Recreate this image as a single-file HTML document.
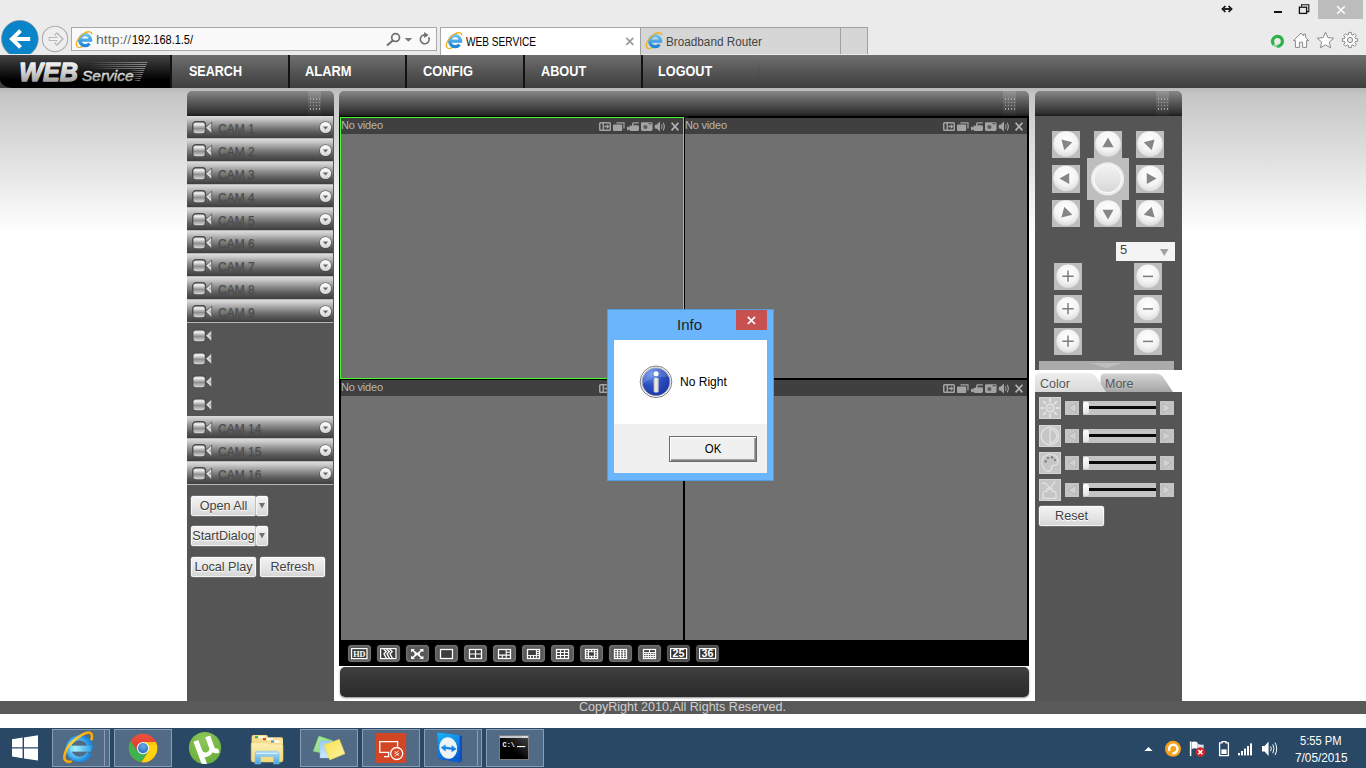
<!DOCTYPE html>
<html><head><meta charset="utf-8"><title>WEB SERVICE</title>
<style>
*{box-sizing:border-box;margin:0;padding:0}
html,body{width:1366px;height:768px;overflow:hidden;background:#fff;font-family:"Liberation Sans",Arial,sans-serif;}
.abs,.abs-c>*{position:absolute}
svg{position:absolute;overflow:visible}
.sx{display:inline-block;transform-origin:0 50%;white-space:nowrap}
#chrome{position:absolute;left:0;top:0;width:1366px;height:55px;background:#ebebeb}
#page{position:absolute;left:0;top:55px;width:1366px;height:673px;background:linear-gradient(#b9b9b9 0px,#b9b9b9 33px,#c6c6c6 40px,#fff 178px,#fff 100%)}
#nav{position:absolute;left:0;top:0;width:1366px;height:33px;background:linear-gradient(#6f6f6f,#555 50%,#3e3e3e)}
.sep{position:absolute;top:0;width:2px;height:33px;background:#121212}
.mi{position:absolute;top:0;height:33px;line-height:32px;color:#fff;font-weight:bold;font-size:14px;white-space:nowrap;transform-origin:0 50%}
#logo{position:absolute;left:0;top:0;width:171px;height:33px;background:linear-gradient(#444,#1c1c1c 45%,#000 75%);border-bottom-left-radius:12px 9px}
.ph{position:absolute;height:25px;border-radius:5px 5px 0 0;background:linear-gradient(#878787,#5e5e5e 40%,#2e2e2e 90%,#1c1c1c)}
.grip{position:absolute;top:0;width:13px;height:25px;background:linear-gradient(rgba(255,255,255,.13),rgba(255,255,255,.02))}
.grip i{position:absolute;width:1px;height:1.5px;background:#a4a4a4}
.panel{position:absolute;background:#555}
#taskbar{position:absolute;left:0;top:728px;width:1366px;height:40px;background:#284866}
</style></head><body>
<svg width="0" height="0" style="left:0;top:0"><defs>
<linearGradient id="ieg" x1="0" y1="0" x2="0" y2="1"><stop offset="0" stop-color="#6cc3f2"/><stop offset="1" stop-color="#1f86d6"/></linearGradient>
<g id="ieico">
 <path d="M14.5 12.4 A5.5 5.5 0 1 1 15.6 9.2 H5" fill="none" stroke="url(#ieg)" stroke-width="3.3"/>
 <path d="M2.4 15.8 C-0.8 12.6 4.3 4.8 9.6 2 C13.6 0 17 0.5 16.8 3.4" fill="none" stroke="#f1b021" stroke-width="1.4"/>
 <path d="M2.4 15.8 C3.4 16.8 5.4 16.5 7.2 15.6" fill="none" stroke="#f1b021" stroke-width="1.2"/>
</g>
</defs></svg>
<style>
#u1{transform:scaleX(1.1253)}
#u2{transform:scaleX(0.8775)}
#t1{transform:scaleX(0.8419)}
#t2{transform:scaleX(0.9788)}
#m1{transform:scaleX(0.8964)}
#m2{transform:scaleX(0.9199)}
#m3{transform:scaleX(0.9182)}
#m4{transform:scaleX(0.9080)}
#m5{transform:scaleX(0.9067)}
#cp{transform:scaleX(0.9645)}
#dti{transform:scaleX(0.9988)}
#dnr{transform:scaleX(1.0024)}
#dok{transform:scaleX(0.9135)}
#ck1{transform:scaleX(0.9283)}
#ck2{transform:scaleX(0.9833)}
</style>
<div id="chrome">
<style>
#chrome .addr{position:absolute;left:71px;top:27px;width:366px;height:24px;background:#f9f9f9;border:1px solid #a9a9a9}
#chrome .url{position:absolute;left:96px;top:28px;height:24px;line-height:24px;font-size:12.5px;color:#000;white-space:nowrap}
#chrome .url b{font-weight:normal;color:#6a6a6a}
#chrome .tab1{position:absolute;left:440px;top:27px;width:201px;height:28px;background:#fff;border:1px solid #a9a9a9;border-bottom:none}
#chrome .tab2{position:absolute;left:640px;top:27px;width:201px;height:27px;background:#d6d6d6;border:1px solid #a0a0a0;border-bottom:none}
#chrome .tab3{position:absolute;left:840px;top:27px;width:28px;height:27px;background:#d6d6d6;border:1px solid #a0a0a0;border-bottom:none}
#chrome .tt{position:absolute;top:29px;height:26px;line-height:26px;font-size:12px;white-space:nowrap}
#chrome .closeb{position:absolute;left:1318px;top:0;width:45px;height:19px;background:#bcbcbc}
</style>
<!-- back button -->
<svg style="left:0;top:18px" width="42" height="36" viewBox="0 18 42 36">
 <defs><clipPath id="bkc"><rect x="0" y="18" width="42" height="36"/></clipPath></defs>
 <g clip-path="url(#bkc)">
 <circle cx="19.9" cy="38.8" r="18.4" fill="#0a84c8" stroke="#8a8f96" stroke-width="0.7"/>
 <path d="M30.2 39 H13 M20.55 30.55 L12 39 L20.55 47.45" fill="none" stroke="#fff" stroke-width="4" stroke-linecap="butt" stroke-linejoin="miter"/>
 </g>
</svg>
<!-- forward button -->
<svg style="left:41px;top:25px" width="28" height="28" viewBox="41 25 28 28">
 <circle cx="55" cy="38.9" r="12.7" fill="#eeeeee" stroke="#adadad" stroke-width="1.1"/>
 <path d="M48.6 39 H60 M55.6 33.4 L61.2 39 L55.6 44.6" fill="none" stroke="#b9b9b9" stroke-width="3.9" stroke-linecap="butt" stroke-linejoin="miter"/>
 <path d="M49.6 39 H60 M56.1 34.6 L60.5 39 L56.1 43.4" fill="none" stroke="#f3f3f3" stroke-width="1.9" stroke-linecap="butt" stroke-linejoin="miter"/>
</svg>
<div class="addr"></div>
<!-- IE icon (address) -->
<svg style="left:74.5px;top:30.5px" width="18" height="17" viewBox="0 0 18 17"><use href="#ieico"/></svg>
<div class="url"><span class="sx" id="u1"><b>http://</b></span></div>
<div class="url" style="left:132px"><span class="sx" id="u2">192.168.1.5/</span></div>
<!-- search / dropdown / refresh -->
<svg style="left:385px;top:30px" width="48" height="18" viewBox="385 30 48 18">
 <circle cx="395.6" cy="37.6" r="3.9" fill="none" stroke="#6f6f6f" stroke-width="1.7"/>
 <path d="M392.8 40.6 L387 45.5" stroke="#6f6f6f" stroke-width="2" stroke-linecap="butt"/>
 <path d="M404.6 38 H412.2 L408.4 41.8 Z" fill="#7a7a7a"/>
 <path d="M428.6 37.2 A4.4 4.4 0 1 1 425 34.9" fill="none" stroke="#6f6f6f" stroke-width="1.6"/>
 <path d="M424.2 32 L428.6 34.9 L424.2 38 Z" fill="#6f6f6f"/>
</svg>
<div class="tab1"></div>
<div class="tab2"></div>
<div class="tab3"></div>
<svg style="left:445px;top:32px" width="18" height="17" viewBox="0 0 18 17"><use href="#ieico"/></svg>
<div class="tt" style="left:466px;color:#000"><span class="sx" id="t1">WEB SERVICE</span></div>
<svg style="left:625px;top:37px" width="10" height="9" viewBox="0 0 10 9"><path d="M1.3 0.8 L8.3 7.8 M8.3 0.8 L1.3 7.8" stroke="#9a9a9a" stroke-width="1.7"/></svg>
<svg style="left:645px;top:32px" width="18" height="17" viewBox="0 0 18 17"><use href="#ieico"/></svg>
<div class="tt" style="left:666px;color:#444"><span class="sx" id="t2">Broadband Router</span></div>
<!-- window buttons -->
<svg style="left:1220px;top:3px" width="14" height="12" viewBox="0 0 14 12"><path d="M3.6 6 H10.4" stroke="#111" stroke-width="1.8"/><path d="M5.4 3 L2.4 6 L5.4 9 M8.6 3 L11.6 6 L8.6 9" fill="none" stroke="#111" stroke-width="1.7"/></svg>
<div class="abs" style="left:1274px;top:11px;width:8px;height:2px;background:#111"></div>
<svg style="left:1298px;top:3px" width="13" height="12" viewBox="0 0 13 12"><path d="M3.5 3.5 V1.8 H10.8 V8.6 H9" fill="none" stroke="#111" stroke-width="1.1"/><rect x="1.4" y="4.2" width="7.2" height="6.2" fill="none" stroke="#111" stroke-width="1.3"/></svg>
<div class="closeb"></div>
<svg style="left:1336px;top:5px" width="10" height="10" viewBox="0 0 10 10"><path d="M1.2 1.2 L8.8 8.8 M8.8 1.2 L1.2 8.8" stroke="#fff" stroke-width="1.5"/></svg>
<!-- right toolbar icons -->
<svg style="left:1269px;top:33px" width="17" height="17" viewBox="0 0 17 17">
 <path d="M4.7 11.6 A5 5 0 1 1 8.2 13.3" fill="none" stroke="#2db24a" stroke-width="3.2" stroke-linecap="butt"/>
 <path d="M8.2 13.3 A5 5 0 0 1 4.7 11.6" fill="none" stroke="#7fd092" stroke-width="2.2"/>
</svg>
<svg style="left:1292px;top:31px" width="18" height="18" viewBox="0 0 18 18">
 <path d="M1.4 9.6 L9 2.2 L11.6 4.7 V3.2 H13.6 V6.6 L16.6 9.6 H14.6 V16.4 H10.6 V11.2 H7.4 V16.4 H3.4 V9.6 Z" fill="#fdfdfd" stroke="#8a8a8a" stroke-width="1"/>
</svg>
<svg style="left:1316px;top:31px" width="19" height="18" viewBox="0 0 19 18">
 <path d="M9.5 1.3 L11.9 6.6 L17.7 7.2 L13.4 11.1 L14.6 16.8 L9.5 13.9 L4.4 16.8 L5.6 11.1 L1.3 7.2 L7.1 6.6 Z" fill="#fdfdfd" stroke="#8a8a8a" stroke-width="1" stroke-linejoin="round"/>
</svg>
<svg style="left:1341px;top:31px" width="18" height="18" viewBox="-9 -9 18 18">
 <g fill="#fdfdfd" stroke="#8a8a8a" stroke-width="1">
 <path d="M5.41 -1.44 L7.59 -1.30 L7.59 1.30 L5.41 1.44 L4.84 2.81 L6.29 4.45 L4.45 6.29 L2.81 4.84 L1.44 5.41 L1.30 7.59 L-1.30 7.59 L-1.44 5.41 L-2.81 4.84 L-4.45 6.29 L-6.29 4.45 L-4.84 2.81 L-5.41 1.44 L-7.59 1.30 L-7.59 -1.30 L-5.41 -1.44 L-4.84 -2.81 L-6.29 -4.45 L-4.45 -6.29 L-2.81 -4.84 L-1.44 -5.41 L-1.30 -7.59 L1.30 -7.59 L1.44 -5.41 L2.81 -4.84 L4.45 -6.29 L6.29 -4.45 L4.84 -2.81 Z" stroke-linejoin="round"/>
 <circle r="2.6" fill="#ebebeb"/>
 </g>
</svg>
</div>
<div id="page">
 <div id="nav">
  <div id="logo">
   <svg style="left:0;top:0" width="171" height="33" viewBox="0 0 171 33">
    <defs>
     <linearGradient id="lgt" x1="0" y1="0" x2="0" y2="1"><stop offset="0" stop-color="#ffffff"/><stop offset="0.45" stop-color="#d8d8d8"/><stop offset="1" stop-color="#8c8c8c"/></linearGradient>
     <linearGradient id="lgs" x1="0" y1="0" x2="1" y2="0"><stop offset="0" stop-color="#9a9a9a" stop-opacity="0"/><stop offset="0.5" stop-color="#8c8c8c" stop-opacity=".55"/><stop offset="1" stop-color="#a5a5a5" stop-opacity=".8"/></linearGradient>
    </defs>
    <g fill="url(#lgs)"><path d="M88.0 7 H147.5 L147.1 8 H88.0 Z"/><path d="M88.5 9 H146.7 L146.3 10 H88.5 Z"/><path d="M89.0 11 H145.9 L145.5 12 H89.0 Z"/><path d="M89.5 13 H145.1 L144.7 14 H89.5 Z"/><path d="M128.0 15 H144.3 L143.9 16 H128.0 Z"/><path d="M129.0 17 H143.5 L143.1 18 H129.0 Z"/><path d="M130.0 19 H142.7 L142.3 20 H130.0 Z"/><path d="M131.0 21 H141.9 L141.5 22 H131.0 Z"/><path d="M132.0 23 H141.1 L140.7 24 H132.0 Z"/><path d="M133.0 25 H140.3 L139.9 26 H133.0 Z"/></g>
    <text x="19.3" y="26.2" font-family="Liberation Sans, Arial, sans-serif" font-weight="bold" font-style="italic" font-size="25" fill="url(#lgt)" stroke="url(#lgt)" stroke-width="1.3" stroke-linejoin="round" textLength="58.6" lengthAdjust="spacingAndGlyphs">WEB</text>
    <text x="82" y="25.6" font-family="Liberation Sans, Arial, sans-serif" font-style="italic" font-size="15.2" fill="url(#lgt)" stroke="url(#lgt)" stroke-width="0.45" textLength="51.5" lengthAdjust="spacingAndGlyphs">Service</text>
   </svg>
  </div>
  <div class="sep" style="left:170px"></div><div class="mi" style="left:189px"><span class="sx" id="m1">SEARCH</span></div>
  <div class="sep" style="left:288px"></div><div class="mi" style="left:305px"><span class="sx" id="m2">ALARM</span></div>
  <div class="sep" style="left:405px"></div><div class="mi" style="left:423px"><span class="sx" id="m3">CONFIG</span></div>
  <div class="sep" style="left:523px"></div><div class="mi" style="left:541px"><span class="sx" id="m4">ABOUT</span></div>
  <div class="sep" style="left:641px"></div><div class="mi" style="left:658px"><span class="sx" id="m5">LOGOUT</span></div>
  <div class="abs" style="left:758px;top:8px;width:1px;height:20px;background:rgba(0,0,0,.07)"></div>
 </div>
 <!-- footer -->
 <div class="abs" style="left:0;top:646px;width:1366px;height:13px;background:#595959"></div>
 <div class="abs" style="left:0;top:659px;width:1366px;height:14px;background:#fff"></div>
 <div class="abs" id="copy" style="left:579px;top:645px;height:14px;line-height:14px;font-size:13px;color:#cfcfcf;white-space:nowrap"><span class="sx" id="cp">CopyRight 2010,All Rights Reserved.</span></div>
</div><!-- END PAGE -->
<style>
.camrow{position:absolute;left:187px;width:146px;height:23px;background:linear-gradient(#dcdcdc 0,#c9c9c9 3px,#8a8a8a 10px,#5b5b5b 16px,#3e3e3e 22px,#b8b8b8 22px,#b8b8b8 23px)}
.camrow span.t{position:absolute;left:31px;top:6px;font-size:12px;line-height:14px;color:#4b4b4b;text-shadow:0 1px 1px rgba(70,70,70,.45);white-space:nowrap}
.lbtn{position:absolute;height:20px;border-radius:2.5px;background:linear-gradient(#f4f4f4,#e4e4e4 60%,#d4d4d4);box-shadow:inset 0 0 0 1px rgba(255,255,255,.7),0 0 0 0.5px #888;font-size:12.6px;line-height:20px;color:#404040;text-align:center;white-space:nowrap;text-shadow:0 1px 0 #fff}
</style>
<svg width="0" height="0" style="left:0;top:0"><defs>
<linearGradient id="camg" x1="0" y1="0" x2="0" y2="1"><stop offset="0" stop-color="#cfcfcf"/><stop offset="0.22" stop-color="#ececec"/><stop offset="0.55" stop-color="#8e8e8e"/><stop offset="0.8" stop-color="#bdbdbd"/><stop offset="1" stop-color="#e2e2e2"/></linearGradient>
<linearGradient id="ddg" x1="0" y1="0" x2="0" y2="1"><stop offset="0" stop-color="#ffffff"/><stop offset="1" stop-color="#d4d4d4"/></linearGradient>
<g id="cam">
 <rect x="0.7" y="0.7" width="12.8" height="12.2" rx="3.2" fill="url(#camg)" stroke="#4c4c4c" stroke-width="1.4"/>
 <path d="M13.7 6.7 L19.7 1 V12.4 Z" fill="#dedede" stroke="#505050" stroke-width="0.8" stroke-linejoin="round"/>
 <path d="M16.8 6.7 L18.7 4.6 V8.8 Z" fill="#a6a6a6"/>
</g>
<g id="dd">
 <circle cx="6.5" cy="6.7" r="6.4" fill="#444" opacity=".6"/>
 <circle cx="6.5" cy="6.5" r="5.6" fill="url(#ddg)"/>
 <path d="M3.9 5.4 H9.1 L6.5 8.4 Z" fill="#666"/>
</g>
</defs></svg>
<div class="panel" style="left:187px;top:115px;width:147px;height:586px"></div>
<div class="ph" style="left:187px;top:91px;width:147px"><div class="grip" style="left:121px"><i style="left:2px;top:7.4px"></i><i style="left:5px;top:7.4px"></i><i style="left:8px;top:7.4px"></i><i style="left:11px;top:7.4px"></i><i style="left:2px;top:10.6px"></i><i style="left:5px;top:10.6px"></i><i style="left:8px;top:10.6px"></i><i style="left:11px;top:10.6px"></i><i style="left:2px;top:13.8px"></i><i style="left:5px;top:13.8px"></i><i style="left:8px;top:13.8px"></i><i style="left:11px;top:13.8px"></i><i style="left:2px;top:17.0px"></i><i style="left:5px;top:17.0px"></i><i style="left:8px;top:17.0px"></i><i style="left:11px;top:17.0px"></i></div></div>
<div class="camrow" style="top:116px"><svg style="left:5px;top:5px" width="21" height="14" viewBox="0 0 21 14"><use href="#cam"/></svg><span class="t">CAM 1</span><svg style="left:132px;top:4.8px" width="13" height="13" viewBox="0 0 13 13"><use href="#dd"/></svg></div>
<div class="camrow" style="top:139px"><svg style="left:5px;top:5px" width="21" height="14" viewBox="0 0 21 14"><use href="#cam"/></svg><span class="t">CAM 2</span><svg style="left:132px;top:4.8px" width="13" height="13" viewBox="0 0 13 13"><use href="#dd"/></svg></div>
<div class="camrow" style="top:162px"><svg style="left:5px;top:5px" width="21" height="14" viewBox="0 0 21 14"><use href="#cam"/></svg><span class="t">CAM 3</span><svg style="left:132px;top:4.8px" width="13" height="13" viewBox="0 0 13 13"><use href="#dd"/></svg></div>
<div class="camrow" style="top:185px"><svg style="left:5px;top:5px" width="21" height="14" viewBox="0 0 21 14"><use href="#cam"/></svg><span class="t">CAM 4</span><svg style="left:132px;top:4.8px" width="13" height="13" viewBox="0 0 13 13"><use href="#dd"/></svg></div>
<div class="camrow" style="top:208px"><svg style="left:5px;top:5px" width="21" height="14" viewBox="0 0 21 14"><use href="#cam"/></svg><span class="t">CAM 5</span><svg style="left:132px;top:4.8px" width="13" height="13" viewBox="0 0 13 13"><use href="#dd"/></svg></div>
<div class="camrow" style="top:231px"><svg style="left:5px;top:5px" width="21" height="14" viewBox="0 0 21 14"><use href="#cam"/></svg><span class="t">CAM 6</span><svg style="left:132px;top:4.8px" width="13" height="13" viewBox="0 0 13 13"><use href="#dd"/></svg></div>
<div class="camrow" style="top:254px"><svg style="left:5px;top:5px" width="21" height="14" viewBox="0 0 21 14"><use href="#cam"/></svg><span class="t">CAM 7</span><svg style="left:132px;top:4.8px" width="13" height="13" viewBox="0 0 13 13"><use href="#dd"/></svg></div>
<div class="camrow" style="top:277px"><svg style="left:5px;top:5px" width="21" height="14" viewBox="0 0 21 14"><use href="#cam"/></svg><span class="t">CAM 8</span><svg style="left:132px;top:4.8px" width="13" height="13" viewBox="0 0 13 13"><use href="#dd"/></svg></div>
<div class="camrow" style="top:300px"><svg style="left:5px;top:5px" width="21" height="14" viewBox="0 0 21 14"><use href="#cam"/></svg><span class="t">CAM 9</span><svg style="left:132px;top:4.8px" width="13" height="13" viewBox="0 0 13 13"><use href="#dd"/></svg></div>
<svg style="left:192px;top:329px" width="21" height="14" viewBox="0 0 21 14"><use href="#cam"/></svg>
<svg style="left:192px;top:352px" width="21" height="14" viewBox="0 0 21 14"><use href="#cam"/></svg>
<svg style="left:192px;top:375px" width="21" height="14" viewBox="0 0 21 14"><use href="#cam"/></svg>
<svg style="left:192px;top:398px" width="21" height="14" viewBox="0 0 21 14"><use href="#cam"/></svg>
<div class="camrow" style="top:416px"><svg style="left:5px;top:5px" width="21" height="14" viewBox="0 0 21 14"><use href="#cam"/></svg><span class="t">CAM 14</span><svg style="left:132px;top:4.8px" width="13" height="13" viewBox="0 0 13 13"><use href="#dd"/></svg></div>
<div class="camrow" style="top:439px"><svg style="left:5px;top:5px" width="21" height="14" viewBox="0 0 21 14"><use href="#cam"/></svg><span class="t">CAM 15</span><svg style="left:132px;top:4.8px" width="13" height="13" viewBox="0 0 13 13"><use href="#dd"/></svg></div>
<div class="camrow" style="top:462px"><svg style="left:5px;top:5px" width="21" height="14" viewBox="0 0 21 14"><use href="#cam"/></svg><span class="t">CAM 16</span><svg style="left:132px;top:4.8px" width="13" height="13" viewBox="0 0 13 13"><use href="#dd"/></svg></div>
<div class="lbtn" style="left:191px;top:496px;width:65px">Open All</div>
<div class="lbtn" style="left:256px;top:496px;width:12px"><svg style="left:3px;top:7px" width="6" height="6" viewBox="0 0 6 6"><path d="M0 0 H6 L3 5.6 Z" fill="#707070"/></svg></div>
<div class="lbtn" style="left:191px;top:526px;width:65px">StartDialog</div>
<div class="lbtn" style="left:256px;top:526px;width:12px"><svg style="left:3px;top:7px" width="6" height="6" viewBox="0 0 6 6"><path d="M0 0 H6 L3 5.6 Z" fill="#707070"/></svg></div>
<div class="lbtn" style="left:191px;top:557px;width:65px">Local Play</div>
<div class="lbtn" style="left:260px;top:557px;width:65px">Refresh</div>
<style>
.cell{position:absolute;width:344px;height:262px;border:1px solid #000;background:#707070}
.cell.sel{border-color:#42ff2a}
.cell .tb{position:absolute;left:0;top:0;width:342px;height:16px;background:#404040}
.cell .nv{position:absolute;left:0px;top:1px;font-size:11px;line-height:13px;color:#b6b6b6;white-space:nowrap;letter-spacing:-0.2px}
.tbtn{position:absolute;top:645px;width:23px;height:17px;border-radius:4px;background:#585858;box-shadow:inset 0 0 2px 1.2px #757575,0 0 1px rgba(100,100,100,.7)}
.tbtn.dk{background:#474747;box-shadow:inset 0 0 2px 1.2px #5e5e5e,0 0 1px rgba(90,90,90,.7)}
.tbtn svg{left:0;top:0}
.tbtn text{font-family:"Liberation Sans",Arial,sans-serif;font-weight:bold;font-size:10px;fill:#fff}
</style>
<svg width="0" height="0" style="left:0;top:0"><defs>
<g id="tico" fill="#a3a3a3" stroke="none">
 <!-- 1: box with arrow, x 0..12 -->
 <path d="M1.6 0 H10.4 Q12 0 12 1.6 V7.4 Q12 9 10.4 9 H1.6 Q0 9 0 7.4 V1.6 Q0 0 1.6 0 Z M1.5 1.5 V7.5 H3.6 V1.5 Z M5 1.5 V7.5 H10.5 V1.5 Z" fill-rule="evenodd"/>
 <path d="M5.4 3.7 H7.8 V2 L10.6 4.5 L7.8 7 V5.3 H5.4 Z"/>
 <!-- 2: two windows, x 14..26 -->
 <path d="M17.4 0.3 H25.6 V6.4 H24.4 V1.5 H17.4 Z"/>
 <rect x="14" y="2.6" width="9.2" height="6.4" rx="0.8"/>
 <!-- 3: record camera, x 28..40 -->
 <path d="M28 4.6 L30.4 5.4 V3.8 H33 V1.8 Q33 0.2 34.8 0.2 H39.8 V1.6 H35 Q34.4 1.6 34.4 2.3 V3.2 H38.6 Q40 3.2 40 4.6 V7.6 Q40 9 38.6 9 H31.8 Q30.4 9 30.4 7.6 L28 8.4 Z"/>
 <!-- 4: photo camera, x 42..53.5 -->
 <path d="M43.4 0.2 H52.2 Q53.6 0.2 53.6 1.6 V7.6 Q53.6 9 52.2 9 H43.4 Q42 9 42 7.6 V1.6 Q42 0.2 43.4 0.2 Z M49.6 1.3 V2.3 H52.4 V1.3 Z" fill-rule="evenodd"/>
 <circle cx="46.4" cy="5" r="2.1" fill="#5c5c5c"/>
 <!-- 5: speaker, x 55.8..67 -->
 <path d="M55.8 2.8 H57.4 L61 -0.4 V9.6 L57.4 6.4 H55.8 Z"/>
 <path d="M62.4 2.4 Q63.8 4.6 62.4 6.8" fill="none" stroke="#a3a3a3" stroke-width="1"/>
 <path d="M64 0.8 Q66.6 4.6 64 8.4" fill="none" stroke="#a3a3a3" stroke-width="1.1"/>
 <!-- 6: X, x 72..80 -->
 <path d="M72.6 0.8 L79.4 8.4 M79.4 0.8 L72.6 8.4" fill="none" stroke="#b4b4b4" stroke-width="1.7"/>
</g>
</defs></svg>
<div class="abs" style="left:339px;top:115px;width:690px;height:551px;background:#000"></div>
<div class="ph" style="left:339px;top:91px;width:690px"><div class="grip" style="left:664px"><i style="left:2px;top:7.4px"></i><i style="left:5px;top:7.4px"></i><i style="left:8px;top:7.4px"></i><i style="left:11px;top:7.4px"></i><i style="left:2px;top:10.6px"></i><i style="left:5px;top:10.6px"></i><i style="left:8px;top:10.6px"></i><i style="left:11px;top:10.6px"></i><i style="left:2px;top:13.8px"></i><i style="left:5px;top:13.8px"></i><i style="left:8px;top:13.8px"></i><i style="left:11px;top:13.8px"></i><i style="left:2px;top:17.0px"></i><i style="left:5px;top:17.0px"></i><i style="left:8px;top:17.0px"></i><i style="left:11px;top:17.0px"></i></div></div>
<div class="cell sel" style="left:340px;top:117px"><div class="tb"></div><div class="nv">No video</div><svg style="left:258px;top:4px" width="82" height="10" viewBox="0 0 82 10"><use href="#tico"/></svg></div>
<div class="cell" style="left:684px;top:117px"><div class="tb"></div><div class="nv">No video</div><svg style="left:258px;top:4px" width="82" height="10" viewBox="0 0 82 10"><use href="#tico"/></svg></div>
<div class="cell" style="left:340px;top:379px"><div class="tb"></div><div class="nv">No video</div><svg style="left:258px;top:4px" width="82" height="10" viewBox="0 0 82 10"><use href="#tico"/></svg></div>
<div class="cell" style="left:684px;top:379px"><div class="tb"></div><div class="nv">No video</div><svg style="left:258px;top:4px" width="82" height="10" viewBox="0 0 82 10"><use href="#tico"/></svg></div>
<div class="tbtn" style="left:348px"><svg width="23" height="17" viewBox="0 0 23 17"><rect x="3.6" y="3.6" width="15.4" height="10" fill="#3c3c3c" stroke="#fff" stroke-width="1.2"/><text x="5.2" y="12.3" textLength="12.2" lengthAdjust="spacingAndGlyphs" style="font-size:9px;font-family:'Liberation Serif',serif">HD</text></svg></div>
<div class="tbtn" style="left:377px"><svg width="23" height="17" viewBox="0 0 23 17"><rect x="3.6" y="3.6" width="15.4" height="10" fill="#3c3c3c" stroke="#fff" stroke-width="1.2"/><path d="M6.6 4 L9.2 6.6 L7 8.8 L9.4 13.2 M9.6 4 L12.2 6.6 L10 8.8 L12.4 13.2 M12.6 4 L15.2 6.6 L13 8.8 L15.4 13.2" stroke="#fff" fill="none" stroke-width="1.35"/></svg></div>
<div class="tbtn" style="left:406px"><svg width="23" height="17" viewBox="0 0 23 17"><path d="M5.4 4.4 L17 13.6 M17 4.4 L5.4 13.6" stroke="#fff" fill="none" stroke-width="1.5"/><path d="M5 4 H9 L5 7.2 Z M17.4 4 H13.4 L17.4 7.2 Z M5 14 H9 L5 10.8 Z M17.4 14 H13.4 L17.4 10.8 Z" fill="#fff"/><path d="M8.4 9 H14" stroke="#fff" fill="none" stroke-width="1.6"/></svg></div>
<div class="tbtn" style="left:435px"><svg width="23" height="17" viewBox="0 0 23 17"><rect x="5.5" y="4.5" width="12.0" height="9.0" fill="#3c3c3c" stroke="#fff" stroke-width="1.3"/><path d="" stroke="#fff" fill="none" stroke-width="1.00"/></svg></div>
<div class="tbtn" style="left:464px"><svg width="23" height="17" viewBox="0 0 23 17"><rect x="5.5" y="4.5" width="12.0" height="9.0" fill="#3c3c3c" stroke="#fff" stroke-width="1.3"/><path d="M11.50 4.5 V13.5 M5.5 9.00 H17.5 " stroke="#fff" fill="none" stroke-width="1.20"/></svg></div>
<div class="tbtn" style="left:493px"><svg width="23" height="17" viewBox="0 0 23 17"><rect x="5.5" y="4.5" width="12.0" height="9.0" fill="#3c3c3c" stroke="#fff" stroke-width="1.3"/><path d="M13.2 4.5 V13.5 M5.5 10.1 H17.5 M9.3 10.1 V13.5 M13.2 7.3 H17.5" stroke="#fff" fill="none" stroke-width="1.10"/></svg></div>
<div class="tbtn" style="left:522px"><svg width="23" height="17" viewBox="0 0 23 17"><rect x="5.5" y="4.5" width="12.0" height="9.0" fill="#3c3c3c" stroke="#fff" stroke-width="1.3"/><path d="M14.4 4.5 V13.5 M5.5 10.6 H17.5 M8.5 10.6 V13.5 M11.5 10.6 V13.5 M14.4 6.6 H17.5 M14.4 8.6 H17.5" stroke="#fff" fill="none" stroke-width="1.00"/></svg></div>
<div class="tbtn" style="left:551px"><svg width="23" height="17" viewBox="0 0 23 17"><rect x="5.5" y="4.5" width="12.0" height="9.0" fill="#3c3c3c" stroke="#fff" stroke-width="1.3"/><path d="M9.50 4.5 V13.5 M13.50 4.5 V13.5 M5.5 7.50 H17.5 M5.5 10.50 H17.5 " stroke="#fff" fill="none" stroke-width="1.15"/></svg></div>
<div class="tbtn" style="left:580px"><svg width="23" height="17" viewBox="0 0 23 17"><rect x="5.5" y="4.5" width="12.0" height="9.0" fill="#3c3c3c" stroke="#fff" stroke-width="1.3"/><path d="M8.50 4.5 V13.5 M14.50 4.5 V13.5 M5.5 6.75 H17.5 M5.5 11.25 H17.5 M11.5 4.5 V6.8 M11.5 11.2 V13.5 M5.5 9.0 H8.5 M14.5 9.0 H17.5" stroke="#fff" fill="none" stroke-width="1.10"/></svg></div>
<div class="tbtn" style="left:609px"><svg width="23" height="17" viewBox="0 0 23 17"><rect x="5.5" y="4.5" width="12.0" height="9.0" fill="#3c3c3c" stroke="#fff" stroke-width="1.3"/><path d="M8.50 4.5 V13.5 M11.50 4.5 V13.5 M14.50 4.5 V13.5 M5.5 6.75 H17.5 M5.5 9.00 H17.5 M5.5 11.25 H17.5 " stroke="#fff" fill="none" stroke-width="1.10"/></svg></div>
<div class="tbtn" style="left:638px"><svg width="23" height="17" viewBox="0 0 23 17"><rect x="5.5" y="4.5" width="12.0" height="9.0" fill="#3c3c3c" stroke="#fff" stroke-width="1.3"/><path d="M5.5 7.56 H17.5 M5.5 9.54 H17.5 M5.5 11.52 H17.5 M11.5 4.5 V7.6 M7.90 7.6 V13.5 M10.30 7.6 V13.5 M12.70 7.6 V13.5 M15.10 7.6 V13.5" stroke="#fff" fill="none" stroke-width="1.00"/></svg></div>
<div class="tbtn dk" style="left:667px"><svg width="23" height="17" viewBox="0 0 23 17"><rect x="3.6" y="3.6" width="16" height="9.8" fill="#2e2e2e" stroke="#fff" stroke-width="1.2"/><text x="5.6" y="12.1" textLength="12" lengthAdjust="spacingAndGlyphs">25</text></svg></div>
<div class="tbtn dk" style="left:696px"><svg width="23" height="17" viewBox="0 0 23 17"><rect x="3.6" y="3.6" width="16" height="9.8" fill="#2e2e2e" stroke="#fff" stroke-width="1.2"/><text x="5.6" y="12.1" textLength="12" lengthAdjust="spacingAndGlyphs">36</text></svg></div>
<div class="abs" style="left:340px;top:667px;width:689px;height:30px;border-radius:5px;background:linear-gradient(#414141,#363636 40%,#2b2b2b);box-shadow:0 1px 2px rgba(0,0,0,.45)"></div>
<style>
.pb{position:absolute;background:#bebebe}
.sl{position:absolute;height:14px;background:#c4c4c4}
.cico{position:absolute;left:1039px;width:22px;height:22px;background:#c6c6c6;box-shadow:inset 0 0 0 1px #d6d6d6}
</style>
<svg width="0" height="0" style="left:0;top:0"><defs>
<radialGradient id="pbg" cx="0.5" cy="0.35" r="0.7"><stop offset="0" stop-color="#ffffff"/><stop offset="0.6" stop-color="#f3f3f3"/><stop offset="1" stop-color="#d6d6d6"/></radialGradient>
<linearGradient id="pbc" x1="0" y1="0" x2="0" y2="1"><stop offset="0" stop-color="#f2f2f2"/><stop offset="1" stop-color="#d8d8d8"/></linearGradient>
<g id="pcirc"><circle cx="14" cy="13" r="12.8" fill="url(#pbg)"/></g>
<g id="larr"><rect width="14" height="14" fill="#c4c4c4"/><path d="M11 2.2 V11.8 L3 7 Z" fill="#d2d2d2" stroke="#b2b2b2" stroke-width="0.9"/></g>
<g id="rarr"><rect width="14" height="14" fill="#c4c4c4"/><path d="M3 2.2 V11.8 L11 7 Z" fill="#d2d2d2" stroke="#b2b2b2" stroke-width="0.9"/></g>
</defs></svg>
<div class="panel" style="left:1035px;top:115px;width:147px;height:255px"></div>
<div class="panel" style="left:1035px;top:392px;width:147px;height:309px"></div>
<div class="ph" style="left:1035px;top:91px;width:147px"><div class="grip" style="left:121px"><i style="left:2px;top:7.4px"></i><i style="left:5px;top:7.4px"></i><i style="left:8px;top:7.4px"></i><i style="left:11px;top:7.4px"></i><i style="left:2px;top:10.6px"></i><i style="left:5px;top:10.6px"></i><i style="left:8px;top:10.6px"></i><i style="left:11px;top:10.6px"></i><i style="left:2px;top:13.8px"></i><i style="left:5px;top:13.8px"></i><i style="left:8px;top:13.8px"></i><i style="left:11px;top:13.8px"></i><i style="left:2px;top:17.0px"></i><i style="left:5px;top:17.0px"></i><i style="left:8px;top:17.0px"></i><i style="left:11px;top:17.0px"></i></div></div>
<div class="pb" style="left:1087px;top:158px;width:42px;height:42px"></div>
<div class="pb" style="left:1052px;top:131px;width:28px;height:27px"><svg style="left:0;top:0" width="28" height="27" viewBox="0 0 28 27"><use href="#pcirc"/><polygon points="9.4,8.4 20.3,11.3 12.3,19.3" fill="#868686"/></svg></div>
<div class="pb" style="left:1094px;top:131px;width:28px;height:27px"><svg style="left:0;top:0" width="28" height="27" viewBox="0 0 28 27"><use href="#pcirc"/><polygon points="14.0,6.5 19.6,16.2 8.4,16.2" fill="#868686"/></svg></div>
<div class="pb" style="left:1136px;top:131px;width:28px;height:27px"><svg style="left:0;top:0" width="28" height="27" viewBox="0 0 28 27"><use href="#pcirc"/><polygon points="18.6,8.4 15.7,19.3 7.7,11.3" fill="#868686"/></svg></div>
<div class="pb" style="left:1052px;top:165px;width:28px;height:28px"><svg style="left:0;top:0" width="28" height="28" viewBox="0 0 28 27"><use href="#pcirc"/><polygon points="7.5,13.0 17.2,7.4 17.2,18.6" fill="#868686"/></svg></div>
<div class="pb" style="left:1136px;top:165px;width:28px;height:28px"><svg style="left:0;top:0" width="28" height="28" viewBox="0 0 28 27"><use href="#pcirc"/><polygon points="20.5,13.0 10.8,18.6 10.7,7.4" fill="#868686"/></svg></div>
<div class="pb" style="left:1052px;top:200px;width:28px;height:27px"><svg style="left:0;top:0" width="28" height="27" viewBox="0 0 28 27"><use href="#pcirc"/><polygon points="9.4,17.6 12.3,6.7 20.3,14.7" fill="#868686"/></svg></div>
<div class="pb" style="left:1094px;top:200px;width:28px;height:27px"><svg style="left:0;top:0" width="28" height="27" viewBox="0 0 28 27"><use href="#pcirc"/><polygon points="14.0,19.5 8.4,9.8 19.6,9.7" fill="#868686"/></svg></div>
<div class="pb" style="left:1136px;top:200px;width:28px;height:27px"><svg style="left:0;top:0" width="28" height="27" viewBox="0 0 28 27"><use href="#pcirc"/><polygon points="18.6,17.6 7.7,14.7 15.7,6.7" fill="#868686"/></svg></div>
<svg style="left:1087px;top:158px" width="42" height="42" viewBox="0 0 42 42"><circle cx="20.6" cy="20.8" r="16.6" fill="#ebebeb"/><circle cx="20.6" cy="20.8" r="13.2" fill="url(#pbc)"/><circle cx="20.6" cy="20.8" r="13.9" fill="none" stroke="#f9f9f9" stroke-width="1.3"/></svg>
<div class="abs" style="left:1116px;top:242px;width:59px;height:19px;background:#f4f4f4;font-size:13px;line-height:16px;color:#444;padding-left:4px">5<svg style="left:44px;top:6.5px" width="9" height="7" viewBox="0 0 9 7"><path d="M0 0 H8.6 L4.3 7 Z" fill="#a2a2a2"/></svg></div>
<div class="pb" style="left:1054px;top:263px;width:28px;height:27px"><svg style="left:0;top:0" width="28" height="27" viewBox="0 0 28 27"><circle cx="14" cy="13.2" r="11.6" fill="url(#pbg)"/><path d="M8.4 13.2 H19.6 M14 7.6 V18.8" stroke="#7c7c7c" stroke-width="1.5" fill="none"/></svg></div>
<div class="pb" style="left:1134px;top:263px;width:28px;height:27px"><svg style="left:0;top:0" width="28" height="27" viewBox="0 0 28 27"><circle cx="14" cy="13.2" r="11.6" fill="url(#pbg)"/><path d="M9 13.4 H19" stroke="#7c7c7c" stroke-width="1.5" fill="none"/></svg></div>
<div class="pb" style="left:1054px;top:295px;width:28px;height:28px"><svg style="left:0;top:0" width="28" height="28" viewBox="0 0 28 27"><circle cx="14" cy="13.2" r="11.6" fill="url(#pbg)"/><path d="M8.4 13.2 H19.6 M14 7.6 V18.8" stroke="#7c7c7c" stroke-width="1.5" fill="none"/></svg></div>
<div class="pb" style="left:1134px;top:295px;width:28px;height:28px"><svg style="left:0;top:0" width="28" height="28" viewBox="0 0 28 27"><circle cx="14" cy="13.2" r="11.6" fill="url(#pbg)"/><path d="M9 13.4 H19" stroke="#7c7c7c" stroke-width="1.5" fill="none"/></svg></div>
<div class="pb" style="left:1054px;top:328px;width:28px;height:27px"><svg style="left:0;top:0" width="28" height="27" viewBox="0 0 28 27"><circle cx="14" cy="13.2" r="11.6" fill="url(#pbg)"/><path d="M8.4 13.2 H19.6 M14 7.6 V18.8" stroke="#7c7c7c" stroke-width="1.5" fill="none"/></svg></div>
<div class="pb" style="left:1134px;top:328px;width:28px;height:27px"><svg style="left:0;top:0" width="28" height="27" viewBox="0 0 28 27"><circle cx="14" cy="13.2" r="11.6" fill="url(#pbg)"/><path d="M9 13.4 H19" stroke="#7c7c7c" stroke-width="1.5" fill="none"/></svg></div>
<div class="abs" style="left:1039px;top:361px;width:135px;height:9px;background:#ababab"><svg style="left:52px;top:2px" width="31" height="6" viewBox="0 0 31 6"><path d="M0 0 H31 L15.5 5.6 Z" fill="#bdbdbd"/></svg></div>
<svg style="left:1035px;top:372px" width="147" height="21" viewBox="0 0 147 21">
<defs><linearGradient id="tb1" x1="0" y1="0" x2="0" y2="1"><stop offset="0" stop-color="#eeeeee"/><stop offset="1" stop-color="#d9d9d9"/></linearGradient>
<linearGradient id="tb2" x1="0" y1="0" x2="0" y2="1"><stop offset="0" stop-color="#d4d4d4"/><stop offset="1" stop-color="#a6a6a6"/></linearGradient></defs>
<path d="M65.5 20 V5 Q66 1.6 71 1.6 H120 Q125 1.6 128 5 L138 20 Z" fill="url(#tb2)"/>
<path d="M0 20 V6 Q0 1 5 1 H53 Q59 1 62 6 L71 20 Z" fill="url(#tb1)"/>
</svg>
<div class="abs" style="left:1040px;top:377px;font-size:12.5px;line-height:14px;color:#555;text-shadow:0 1px 0 rgba(255,255,255,.6)">Color</div>
<div class="abs" style="left:1105px;top:377px;font-size:12.5px;line-height:14px;color:#555;text-shadow:0 1px 0 rgba(255,255,255,.3)">More</div>
<div class="cico" style="top:397px"><svg style="left:0;top:0" width="22" height="22" viewBox="0 0 22 22"><circle cx="11" cy="11" r="3.7" stroke="#e4e4e4" fill="none" stroke-width="1.5"/><circle cx="11" cy="11" r="1.3" fill="#dcdcdc"/><path d="M11 1.4 V5.2 M11 16.8 V20.6 M1.4 11 H5.2 M16.8 11 H20.6 M4.2 4.2 L6.9 6.9 M15.1 15.1 L17.8 17.8 M17.8 4.2 L15.1 6.9 M6.9 15.1 L4.2 17.8" stroke="#e2e2e2" stroke-width="2.1" fill="none"/></svg></div>
<svg style="left:1065px;top:401px" width="14" height="14" viewBox="0 0 14 14"><use href="#larr"/></svg><div class="sl" style="left:1083px;top:401px;width:73px"><div class="abs" style="left:5px;top:4.6px;width:68px;height:3.8px;background:#0a0a0a"></div><div class="abs" style="left:0;top:1px;width:6px;height:12px;border-radius:2.5px;background:linear-gradient(#ffffff,#e4e4e4)"></div></div><svg style="left:1160px;top:401px" width="14" height="14" viewBox="0 0 14 14"><use href="#rarr"/></svg>
<div class="cico" style="top:425px"><svg style="left:0;top:0" width="22" height="22" viewBox="0 0 22 22"><circle cx="11" cy="11" r="8.8" stroke="#e2e2e2" fill="none" stroke-width="1.3"/><path d="M11 4.2 A6.8 6.8 0 0 1 11 17.8 Z" stroke="#e2e2e2" fill="none" stroke-width="1.3"/></svg></div>
<svg style="left:1065px;top:429px" width="14" height="14" viewBox="0 0 14 14"><use href="#larr"/></svg><div class="sl" style="left:1083px;top:429px;width:73px"><div class="abs" style="left:5px;top:4.6px;width:68px;height:3.8px;background:#0a0a0a"></div><div class="abs" style="left:0;top:1px;width:6px;height:12px;border-radius:2.5px;background:linear-gradient(#ffffff,#e4e4e4)"></div></div><svg style="left:1160px;top:429px" width="14" height="14" viewBox="0 0 14 14"><use href="#rarr"/></svg>
<div class="cico" style="top:452px"><svg style="left:0;top:0" width="22" height="22" viewBox="0 0 22 22"><path d="M9.6 2.6 C15.6 1.6 19.8 5.6 19.2 10 C18.8 13.2 15.6 13.4 13.6 13.6 C11.8 13.8 12.8 15.8 12.4 17.6 C11.8 19.8 7.8 19.8 5.6 17.4 C2.6 14 2 9.2 4.2 5.8 C5.4 4 7.2 3 9.6 2.6 Z" stroke="#e2e2e2" fill="none" stroke-width="1.3"/><circle cx="6.6" cy="9.4" r="1.3" fill="#888"/><circle cx="9" cy="6" r="1.3" fill="#888"/><circle cx="13" cy="5.4" r="1.3" fill="#888"/><circle cx="16" cy="8" r="1.2" fill="#888"/></svg></div>
<svg style="left:1065px;top:456px" width="14" height="14" viewBox="0 0 14 14"><use href="#larr"/></svg><div class="sl" style="left:1083px;top:456px;width:73px"><div class="abs" style="left:5px;top:4.6px;width:68px;height:3.8px;background:#0a0a0a"></div><div class="abs" style="left:0;top:1px;width:6px;height:12px;border-radius:2.5px;background:linear-gradient(#ffffff,#e4e4e4)"></div></div><svg style="left:1160px;top:456px" width="14" height="14" viewBox="0 0 14 14"><use href="#rarr"/></svg>
<div class="cico" style="top:479px"><svg style="left:0;top:0" width="22" height="22" viewBox="0 0 22 22"><path d="M4.2 19.4 V14.2 Q4.2 12.6 6.4 12.4 H7.8 V10.2 H13.2 V12.4 H15 Q17 12.6 17 14.2 V19.4 Z" stroke="#e2e2e2" fill="none" stroke-width="1.3"/><path d="M7.8 10.2 H13.2" stroke="#e2e2e2" fill="none" stroke-width="1.3"/><path d="M10.6 9.6 L16.6 2.2 M2.4 4.6 Q6.6 2.6 10.6 9.6" stroke="#e2e2e2" fill="none" stroke-width="1.3"/></svg></div>
<svg style="left:1065px;top:483px" width="14" height="14" viewBox="0 0 14 14"><use href="#larr"/></svg><div class="sl" style="left:1083px;top:483px;width:73px"><div class="abs" style="left:5px;top:4.6px;width:68px;height:3.8px;background:#0a0a0a"></div><div class="abs" style="left:0;top:1px;width:6px;height:12px;border-radius:2.5px;background:linear-gradient(#ffffff,#e4e4e4)"></div></div><svg style="left:1160px;top:483px" width="14" height="14" viewBox="0 0 14 14"><use href="#rarr"/></svg>
<div class="lbtn" style="left:1039px;top:506px;width:65px">Reset</div>
<div class="abs" style="left:607px;top:309px;width:167px;height:172px;background:#6ab5fb;border:1px solid #549ddb"></div>
<div class="abs" style="left:736px;top:310px;width:31px;height:20px;background:#c75050"></div>
<svg style="left:747px;top:316px" width="9" height="9" viewBox="0 0 9 9"><path d="M0.8 0.8 L8 8 M8 0.8 L0.8 8" stroke="#fff" stroke-width="1.7" fill="none"/></svg>
<div class="abs" style="left:677px;top:315px;font-size:15px;line-height:20px;color:#1e1e1e;white-space:nowrap"><span class="sx" id="dti">Info</span></div>
<div class="abs" style="left:614px;top:340px;width:153px;height:84px;background:#fff"></div>
<div class="abs" style="left:614px;top:424px;width:153px;height:49px;background:#f0f0f0"></div>
<svg style="left:639px;top:364px" width="34" height="36" viewBox="0 0 34 36">
 <defs>
  <radialGradient id="ig1" cx="0.32" cy="0.22" r="0.85"><stop offset="0" stop-color="#5f8bea"/><stop offset="0.5" stop-color="#2c4fc0"/><stop offset="1" stop-color="#1c36a6"/></radialGradient>
  <linearGradient id="ig3" x1="0" y1="0" x2="1" y2="0"><stop offset="0" stop-color="#b9b9b9"/><stop offset="0.45" stop-color="#f7f4ea"/><stop offset="1" stop-color="#c4c4c4"/></linearGradient>
  <clipPath id="igc"><circle cx="17" cy="17.8" r="13.6"/></clipPath>
 </defs>
 <circle cx="17" cy="17.8" r="15.8" fill="#fdfdfd" stroke="#707070" stroke-width="0.9"/>
 <circle cx="17" cy="17.8" r="14.1" fill="none" stroke="#9a9aa6" stroke-width="0.7"/>
 <circle cx="17" cy="17.8" r="13.6" fill="url(#ig1)"/>
 <path d="M0 23 C6 20 9 14.5 17 13.6 C24 12.8 29 13.4 34 12 V0 H0 Z" fill="#ffffff" opacity="0.16" clip-path="url(#igc)"/>
 <circle cx="17.1" cy="9.7" r="2.5" fill="#fff"/>
 <rect x="14.9" y="14" width="4.5" height="14.3" rx="1.1" fill="url(#ig3)" stroke="#e9e9e9" stroke-width="0.4"/>
</svg>
<div class="abs" style="left:680px;top:375px;font-size:12px;line-height:15px;color:#000;white-space:nowrap"><span class="sx" id="dnr">No Right</span></div>
<div class="abs" style="left:669px;top:436px;width:88px;height:26px;background:#f0f0f0;border:1px solid #6b6b6b;box-shadow:inset 1px 1px 0 #fff,inset -1px -1px 0 #808080,inset -2px -2px 0 #a6a6a6;font-size:12.5px;line-height:25px;text-align:center;color:#000"><span class="sx" id="dok" style="transform-origin:50% 50%">OK</span></div>
<div id="taskbar">
<style>
#taskbar .tk{position:absolute;top:1px;height:38px;background:#516a85;border:1px solid #8a9db2}
#taskbar .clk{position:absolute;color:#fff;font-size:12px;line-height:14px;white-space:nowrap}
</style>
<div class="tk" style="left:52px;width:53px"></div><div class="tk" style="left:105px;width:5px;border-left:none"></div>
<div class="tk" style="left:114px;width:58px"></div>
<div class="tk" style="left:300px;width:58px"></div>
<div class="tk" style="left:362px;width:58px"></div>
<div class="tk" style="left:424px;width:54px"></div><div class="tk" style="left:478px;width:4px;border-left:none"></div>
<div class="tk" style="left:486px;width:58px"></div>
<!-- start -->
<svg style="left:11px;top:6px" width="28" height="28" viewBox="0 0 28 28"><path d="M1 5.2 L11.6 3.6 V13.2 H1 Z M13 3.4 L27 1.2 V13.2 H13 Z M1 14.6 H11.6 V24.2 L1 22.6 Z M13 14.6 H27 V26.6 L13 24.4 Z" fill="#fff"/></svg>
<!-- IE big -->
<svg style="left:60px;top:2px" width="36" height="36" viewBox="60 730 36 36">
 <defs><radialGradient id="ieb" cx="0.4" cy="0.5" r="0.62"><stop offset="0" stop-color="#a4f2ff"/><stop offset="0.5" stop-color="#66ccf8"/><stop offset="1" stop-color="#1a88de"/></radialGradient>
 <linearGradient id="iebar" gradientUnits="userSpaceOnUse" x1="68" y1="0" x2="92" y2="0"><stop offset="0" stop-color="#5cc4f6"/><stop offset="0.3" stop-color="#a4f2ff"/><stop offset="1" stop-color="#2f9ce8"/></linearGradient>
 <linearGradient id="ier" x1="0" y1="1" x2="1" y2="0"><stop offset="0" stop-color="#f7a600"/><stop offset="0.5" stop-color="#ffd23a"/><stop offset="1" stop-color="#f5a700"/></linearGradient></defs>
 <path d="M89.2 753.2 A10.9 10.9 0 1 1 90.3 748.6" fill="none" stroke="url(#ieb)" stroke-width="5.4"/>
 <path d="M91.4 748.65 H70" fill="none" stroke="url(#iebar)" stroke-width="6"/>
 <path d="M70 761.8 C66 762.4 63.6 759.6 64.4 756 C65.4 751 67.6 747 70 744.4 C73.4 740.4 78 737 82.8 734.4 C86 732.6 90 731.7 91.5 734 C92.3 735.4 92.2 737.4 91.6 739.2" fill="none" stroke="url(#ier)" stroke-width="2.6" stroke-linecap="round"/>
 <path d="M66.4 761.6 C68.4 762.6 70.4 762.2 72 761" fill="none" stroke="#f3a200" stroke-width="1.6"/>
</svg>
<!-- chrome -->
<svg style="left:127px;top:4px" width="32" height="32" viewBox="-16 -16.1 32 32">
 <defs><linearGradient id="chr" x1="0" y1="0" x2="0" y2="1"><stop offset="0" stop-color="#f0503e"/><stop offset="1" stop-color="#d42820"/></linearGradient>
 <radialGradient id="chb" cx="0.5" cy="0.3" r="0.7"><stop offset="0" stop-color="#6aa8e6"/><stop offset="1" stop-color="#2a6fc4"/></radialGradient></defs>
 <circle r="14.3" fill="url(#chr)"/>
 <path d="M-12.4 -7.2 L-5.4 3.1 L0 0 L5.4 3.1 L-1.6 14.2 A14.3 14.3 0 0 1 -12.4 -7.2 Z" fill="#3fb34f"/>
 <path d="M0 -6.2 H12.9 A14.3 14.3 0 0 1 -1.6 14.2 L5.4 3.1 L0 0 Z" fill="#fdd20e"/>
 <path d="M0 -6.2 H12.9 A14.3 14.3 0 0 1 13.8 -3.6 L4 -3 Z" fill="#f2b90c" opacity=".5"/>
 <circle r="6.2" fill="#f6f6f6"/><circle r="5.1" fill="url(#chb)"/>
</svg>
<!-- utorrent -->
<svg style="left:188px;top:3px" width="34" height="34" viewBox="-17 -17 34 34">
 <defs><clipPath id="utc"><circle r="16.1"/></clipPath>
 <radialGradient id="utg" cx="0.45" cy="0.25" r="0.8"><stop offset="0" stop-color="#8cc85a"/><stop offset="1" stop-color="#69ab38"/></radialGradient></defs>
 <circle r="16.1" fill="url(#utg)"/>
 <g clip-path="url(#utc)"><g transform="rotate(-20) translate(-0.5 -0.5)">
 <path d="M-8.2 -9.4 H-3 V1.4 Q-3 5 0.8 5 Q4.4 5 4.4 1.4 V-9.4 H9.6 V3 Q9.6 5.4 12.6 5.2 V9.6 Q8.2 10 6.2 7.2 Q3.2 10 -0.4 9.6 Q-1.8 9.4 -3 8.8 V19 H-8.2 Z" fill="#fff"/>
 </g></g>
</svg>
<!-- explorer -->
<svg style="left:250px;top:5px" width="34" height="32" viewBox="250 733 34 32">
 <defs><linearGradient id="exb" x1="0" y1="0" x2="0" y2="1"><stop offset="0" stop-color="#fdf0b6"/><stop offset="1" stop-color="#f3d87c"/></linearGradient>
 <linearGradient id="exs" x1="0" y1="0" x2="0" y2="1"><stop offset="0" stop-color="#a8dcf6"/><stop offset="1" stop-color="#4aa6de"/></linearGradient></defs>
 <path d="M251.6 737 Q251.6 735 253.6 735 H266 Q268 735 268 737 V745 H251.6 Z" fill="#f4dc8a"/>
 <rect x="255" y="736.2" width="3" height="2" fill="#2cb34a"/><rect x="258.4" y="736.2" width="7" height="2" fill="#fff"/>
 <path d="M261 739 Q261 737.2 263 737.2 H281 Q283 737.2 283 739 V747 H261 Z" fill="#f6e094"/>
 <rect x="263" y="738.2" width="3" height="2" fill="#d8342c"/><rect x="266.4" y="738.2" width="7" height="2" fill="#fff"/>
 <path d="M269 741.4 Q269 739.6 271 739.6 H281 Q283 739.6 283 741.4 V748 H269 Z" fill="#f8e6a2"/>
 <rect x="271" y="740.6" width="3" height="1.9" fill="#2f94e6"/><rect x="274.4" y="740.6" width="5" height="1.9" fill="#fff"/>
 <path d="M251.2 744 Q251.2 742.2 253.2 742.2 H267 L269.4 744 H281 Q283 744 283 746 V760 Q283 762 281 762 H253.2 Q251.2 762 251.2 760 Z" fill="url(#exb)" stroke="#e8c860" stroke-width="0.6"/>
 <path d="M255 764 V753.6 Q255 751.2 257.4 751.2 H276.8 Q279.2 751.2 279.2 753.6 V764 H273.6 V756.6 H260.6 V764 Z" fill="url(#exs)" stroke="#7cc4ee" stroke-width="0.5"/>
 <path d="M256 753.4 H278.2" stroke="#d4eefb" stroke-width="1.2"/>
</svg>
<!-- sticky-like squares -->
<svg style="left:310px;top:5px" width="38" height="30" viewBox="310 733 38 30">
 <defs><linearGradient id="stg" x1="0" y1="0" x2="1" y2="1"><stop offset="0" stop-color="#b4ecac"/><stop offset="1" stop-color="#7ed278"/></linearGradient>
 <linearGradient id="stb" x1="0" y1="0" x2="0" y2="1"><stop offset="0" stop-color="#9ccdf6"/><stop offset="1" stop-color="#cfe8fb"/></linearGradient>
 <linearGradient id="sty" x1="0" y1="0" x2="1" y2="1"><stop offset="0" stop-color="#f9e14e"/><stop offset="1" stop-color="#fdf3a6"/></linearGradient></defs>
 <path d="M318.8 736 L332.4 740.4 L328 754.4 L313.2 751.2 Z" fill="url(#stg)" stroke="#6cc866" stroke-width="0.5"/>
 <path d="M320 741.2 H333 V758 H320 Z" fill="url(#stb)" stroke="#8cc4f2" stroke-width="0.5"/>
 <path d="M339.3 739.2 L345 753.7 L329.8 759.9 L324.1 745.1 Z" fill="url(#sty)" stroke="#f0d23a" stroke-width="0.5"/>
</svg>
<!-- remote desktop -->
<svg style="left:376px;top:5px" width="30" height="30" viewBox="376 733 30 30">
 <rect x="376" y="733" width="30.2" height="30" fill="#d24625"/>
 <path d="M397.6 746.4 V741.6 H379.8 V752.4 H389.4 M384 756.6 H388.6 V753" fill="none" stroke="#fff" stroke-width="1.3"/>
 <circle cx="396.7" cy="753.5" r="6" fill="#d24625" stroke="#fff" stroke-width="1.3"/>
 <path d="M395 751.2 L396.4 753 L394.4 753.4 M398.6 755.8 L397.2 754 L399.2 753.6 M396.4 753 L398.6 750.6 M397.2 754 L395 756.4" fill="none" stroke="#fff" stroke-width="0.9"/>
</svg>
<!-- teamviewer -->
<svg style="left:434px;top:2px" width="32" height="36" viewBox="434 730 32 36">
 <defs><linearGradient id="tvg" x1="0" y1="0" x2="0.3" y2="1"><stop offset="0" stop-color="#19b4fa"/><stop offset="1" stop-color="#0a5fd0"/></linearGradient>
 <linearGradient id="tva" x1="0" y1="0" x2="0" y2="1"><stop offset="0" stop-color="#2aa8f6"/><stop offset="1" stop-color="#0c66d6"/></linearGradient></defs>
 <path d="M437.2 733.4 Q437.2 732.2 438.6 732.4 L459.4 735.2 L462 736.2 V760.6 L459.4 762.6 L439.4 758.8 Q438 758.6 438 757.2 Z" fill="#0a4ec0"/>
 <path d="M437.2 733.4 Q437.2 732.2 438.6 732.4 L459.6 735.2 V762.6 L439.4 758.8 Q438 758.6 438 757.2 Z" fill="url(#tvg)"/>
 <ellipse cx="448.2" cy="748" rx="8.9" ry="10.8" fill="#eef3f8" transform="rotate(-8 448.2 748)"/>
 <path d="M440.8 747.6 L445.6 744.2 V746.6 L451.6 747.4 V745 L456.6 749 L451.6 752 V749.8 L445.6 749 V751.4 Z" fill="url(#tva)"/>
</svg>
<!-- cmd -->
<svg style="left:498px;top:6px" width="32" height="27" viewBox="498 734 32 27">
 <defs><linearGradient id="cmg" x1="1" y1="0" x2="0.4" y2="0.6"><stop offset="0" stop-color="#4a4a4a"/><stop offset="1" stop-color="#000"/></linearGradient></defs>
 <rect x="499.4" y="735.6" width="29.2" height="23.8" fill="url(#cmg)" stroke="#8e8e8e" stroke-width="0.8"/>
 <rect x="499.8" y="736" width="28.4" height="2" fill="#c6c9cc"/>
 <rect x="522" y="736.4" width="1.2" height="1" fill="#fff"/><rect x="524" y="736.4" width="1.2" height="1" fill="#fff"/><rect x="526" y="736.4" width="1.2" height="1" fill="#fff"/>
 <text x="502.6" y="747" font-family="Liberation Mono, monospace" font-size="8" font-weight="bold" fill="#fff" textLength="12.4" lengthAdjust="spacingAndGlyphs">C:\</text>
 <rect x="517" y="746" width="8.2" height="1.1" fill="#fff"/>
</svg>
<!-- tray -->
<svg style="left:1140px;top:10px" width="140" height="22" viewBox="1140 738 140 22">
 <path d="M1144.4 751 H1152.6 L1148.5 747 Z" fill="#fff"/>
 <circle cx="1173" cy="748.8" r="8" fill="#f7a11a"/>
 <path d="M1169.6 751 A4.2 4.2 0 1 1 1172.4 753.1" fill="none" stroke="#fff" stroke-width="2.4"/>
 <path d="M1190.6 741.4 V756" stroke="#fff" stroke-width="1.5"/>
 <path d="M1191.6 742 Q1195 740.6 1197.6 742.6 V749 Q1195 747.6 1191.6 749 Z" fill="#fff"/>
 <path d="M1197.6 743.6 Q1200.6 745.6 1203.6 744.4 V750.6 Q1200.6 751.6 1197.6 749.6 Z" fill="#dfe6ee"/>
 <circle cx="1200.3" cy="752.1" r="4.8" fill="#d8232a"/><path d="M1198.2 750 L1202.4 754.2 M1202.4 750 L1198.2 754.2" stroke="#fff" stroke-width="1.5"/>
 <path d="M1222 741.6 H1226 V742.8 H1228.4 V755.6 H1219.6 V742.8 H1222 Z" fill="none" stroke="#fff" stroke-width="1.3"/><rect x="1221.4" y="749.4" width="5.2" height="4.6" fill="#fff"/>
 <rect x="1238" y="753" width="2" height="2.4" fill="#fff"/><rect x="1241" y="751" width="2" height="4.4" fill="#fff"/><rect x="1244" y="748.6" width="2" height="6.8" fill="#fff"/><rect x="1247" y="746" width="2" height="9.4" fill="#fff"/><rect x="1250" y="743.4" width="2" height="12" fill="#fff"/>
 <path d="M1262 746 H1264.6 L1268.6 741.6 V756 L1264.6 751.6 H1262 Z" fill="#fff"/>
 <path d="M1270.6 746.4 Q1272 748.8 1270.6 751.2 M1272.8 744.4 Q1275.2 748.8 1272.8 753.2 M1275 742.6 Q1278.4 748.8 1275 755" fill="none" stroke="#fff" stroke-width="1"/>
</svg>
<div class="clk" style="left:1300px;top:6px"><span class="sx" id="ck1">5:55 PM</span></div>
<div class="clk" style="left:1295px;top:23px"><span class="sx" id="ck2">7/05/2015</span></div>
</div>
</body></html>
